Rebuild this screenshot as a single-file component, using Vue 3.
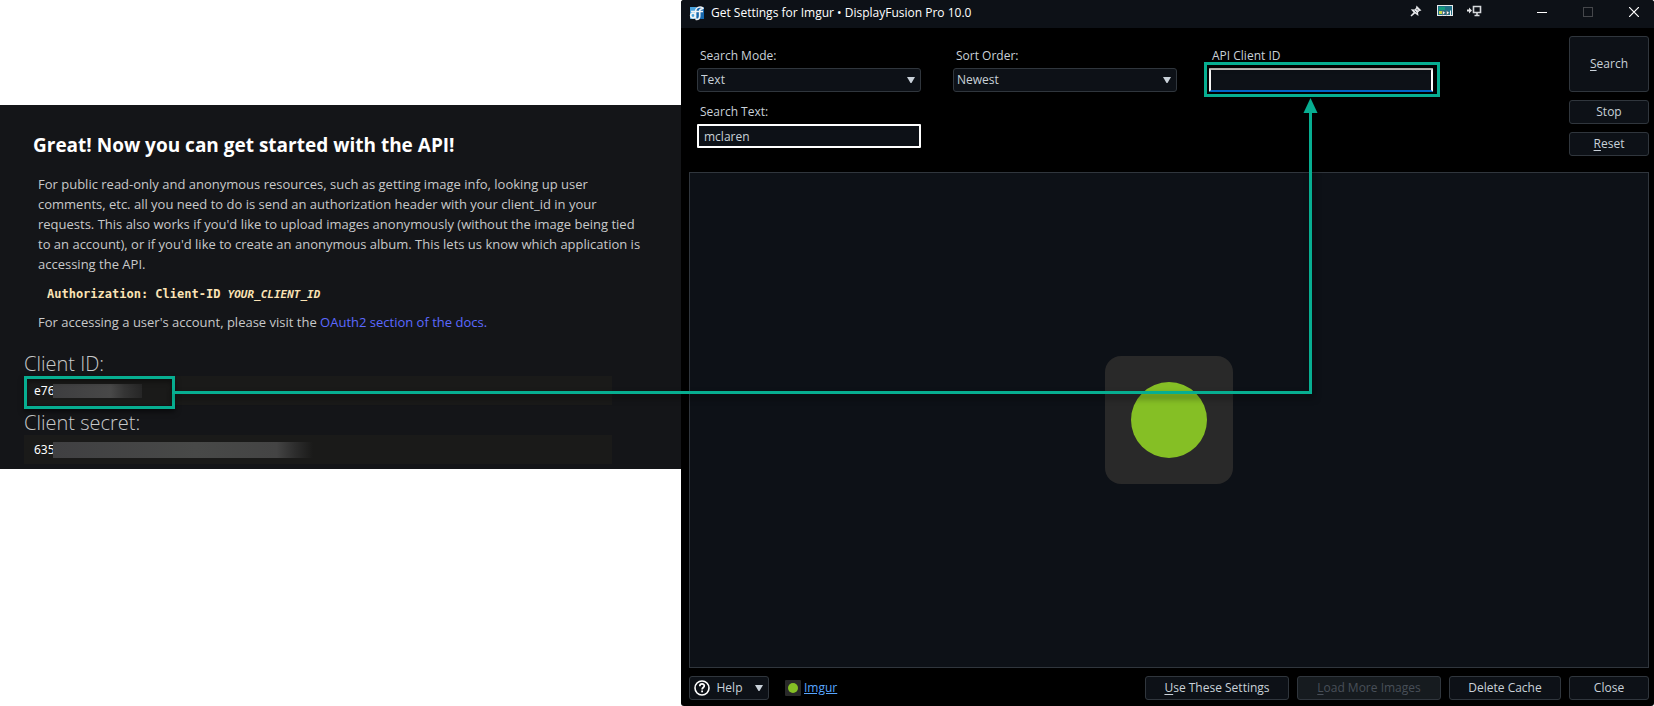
<script setup>
import { ref, onMounted, onBeforeUnmount } from 'vue'

const searchMode = ref('Text')
const sortOrder = ref('Newest')
const searchText = ref('mclaren')
const clientId = ref('')

const page = ref(null)
const source = ref(null)
const target = ref(null)
const size = ref({ w: 0, h: 0 })
const link = ref(null)
let observer

// Route the arrow from the highlighted id to the highlighted field.
function route() {
  const p = page.value.getBoundingClientRect()
  const a = source.value.getBoundingClientRect()
  const b = target.value.getBoundingClientRect()
  size.value = { w: p.width, h: p.height }
  link.value = {
    x1: Math.round(a.right - p.left) - 3,
    y1: Math.round(a.top + a.height / 2 - p.top) - 1,
    x2: Math.round(b.left + b.width * 0.45 - p.left),
    y2: Math.round(b.bottom - p.top) + 1,
  }
}

onMounted(() => {
  route()
  observer = new ResizeObserver(route)
  observer.observe(page.value)
})
onBeforeUnmount(() => observer.disconnect())
</script>

<template>
  <div ref="page" class="page">
    <main class="docs">
      <section class="docs-panel">
        <h1>Great! Now you can get started with the API!</h1>
        <div class="copy">
          <p>
            For public read-only and anonymous resources, such as getting image info, looking up user
            comments, etc. all you need to do is send an authorization header with your client_id in your
            requests. This also works if you'd like to upload images anonymously (without the image being tied
            to an account), or if you'd like to create an anonymous album. This lets us know which application is
            accessing the API.
          </p>
          <pre><code>Authorization: Client-ID <em>YOUR_CLIENT_ID</em></code></pre>
          <p>For accessing a user's account, please visit the <a href="#oauth2">OAuth2 section of the docs.</a></p>
        </div>
        <h2>Client ID:</h2>
        <div class="value">
          <span>e76</span><i class="smudge short"></i>
          <div ref="source" class="mark mark-id"></div>
        </div>
        <h2>Client secret:</h2>
        <div class="value"><span>635</span><i class="smudge long"></i></div>
      </section>
    </main>

    <section class="window">
      <header class="titlebar">
        <svg class="app-icon" width="16" height="16" viewBox="0 0 16 16" aria-hidden="true">
          <rect x="1" y="2" width="6" height="12" fill="#4aa3dc" />
          <rect x="7" y="2" width="8" height="12" fill="#1768ad" />
          <g fill="none" stroke="#f1f3f5" stroke-width="1.700">
            <circle cx="4" cy="10.500" r="2.300" />
            <path d="M6.500 13.500V7c0-3 2-5 4.500-5 2 0 3 .8 3 2M2 6.500h12M6.500 14.200c2.800.8 4.200-.8 4.200-3.200V6c0-1.500 1-2.300 3-2" />
          </g>
        </svg>
        <span class="title">Get Settings for Imgur • DisplayFusion Pro 10.0</span>
        <div class="tools">
          <button type="button" aria-label="Pin window">
            <svg width="12" height="12" viewBox="0 0 12 12">
              <path d="M6.500.5l5 5-2 .5L8 7.500 8.500 11 5 8.500 1.500 11.500.5 10.500l3-3L.8 4.200l3.700.3L6 3z" fill="#e4e6e8" />
              <path d="M4.500 5.500l2 2M6.500 4l1.500 1.500" stroke="#555b63" />
            </svg>
          </button>
          <button type="button" aria-label="Move to monitor">
            <svg width="16" height="12" viewBox="0 0 16 12">
              <rect x=".5" y=".5" width="15" height="10" fill="#1f6f86" stroke="#e8eaec" />
              <rect x="2" y="2" width="6" height="3" fill="#129a7c" />
              <rect x="2" y="6" width="3" height="3" fill="#c8d64b" />
              <path d="M5.500 5.500l3 2.300-3 2.300zM9.500 5.500l3 2.300-3 2.300z" fill="#f5f5f5" stroke="#444" stroke-width=".5" />
              <path d="M13.500 5.500v5" stroke="#f5f5f5" />
            </svg>
          </button>
          <button type="button" aria-label="Send to next monitor">
            <svg width="16" height="12" viewBox="0 0 16 12">
              <path d="M1 4.500h2V2.500L6 5.500 3 8.500v-2H1z" fill="#e4e6e8" />
              <path d="M7.500 1.500h7v6h-7zM11 8v2M8.500 10.500h5" fill="none" stroke="#d6d9dc" stroke-width="1.600" />
            </svg>
          </button>
        </div>
        <div class="controls">
          <button type="button" aria-label="Minimize">
            <svg width="10" height="10" viewBox="0 0 10 10"><path d="M0 5.500h10" stroke="#fff" /></svg>
          </button>
          <button type="button" aria-label="Maximize" disabled>
            <svg width="10" height="10" viewBox="0 0 10 10"><rect x=".5" y=".5" width="9" height="9" fill="none" stroke="#45474b" /></svg>
          </button>
          <button type="button" aria-label="Close window">
            <svg width="10" height="10" viewBox="0 0 10 10"><path d="M0 0l10 10M10 0L0 10" stroke="#fff" stroke-width="1.200" /></svg>
          </button>
        </div>
      </header>

      <div class="body">
        <form class="search" @submit.prevent>
          <div class="fields">
            <div class="field">
              <label for="mode">Search Mode:</label>
              <div class="select">
                <select id="mode" v-model="searchMode"><option>Text</option></select>
                <svg width="8" height="6" viewBox="0 0 8 6"><path d="M0 0h8L4.500 6h-1z" fill="#c9d1d9" /></svg>
              </div>
            </div>
            <div class="field">
              <label for="order">Sort Order:</label>
              <div class="select">
                <select id="order" v-model="sortOrder"><option>Newest</option></select>
                <svg width="8" height="6" viewBox="0 0 8 6"><path d="M0 0h8L4.500 6h-1z" fill="#c9d1d9" /></svg>
              </div>
            </div>
            <div class="field">
              <label for="client">API Client ID</label>
              <div class="marked">
                <input id="client" v-model="clientId" class="active" type="text" />
                <div ref="target" class="mark mark-field"></div>
              </div>
            </div>
            <div class="field">
              <label for="text">Search Text:</label>
              <input id="text" v-model="searchText" type="text" />
            </div>
          </div>
          <div class="actions">
            <button type="submit" class="btn tall"><u>S</u>earch</button>
            <button type="button" class="btn">Stop</button>
            <button type="button" class="btn"><u>R</u>eset</button>
          </div>
        </form>

        <div class="results">
          <div class="tile"><div class="dot"></div></div>
        </div>

        <footer class="bottom">
          <button type="button" class="btn help">
            <svg width="16" height="16" viewBox="0 0 16 16">
              <circle cx="8" cy="8" r="7" fill="none" stroke="#fff" stroke-width="1.600" />
              <path d="M5.800 6.200c0-3 4.600-2.900 4.500-.2 0 1.500-2.200 1.600-2.200 3.400" fill="none" stroke="#fff" stroke-width="1.700" />
              <rect x="7.200" y="10.500" width="1.800" height="1.800" fill="#fff" />
            </svg>
            <span>Help</span>
            <svg width="8" height="6" viewBox="0 0 8 6"><path d="M0 0h8L4.500 6h-1z" fill="#c9d1d9" /></svg>
          </button>
          <a class="provider" href="#imgur">
            <span class="badge"></span>
            <span class="name">Imgur</span>
          </a>
          <button type="button" class="btn wide push"><u>U</u>se These Settings</button>
          <button type="button" class="btn wide" disabled><u>L</u>oad More Images</button>
          <button type="button" class="btn medium">Delete Cache</button>
          <button type="button" class="btn">Close</button>
        </footer>
      </div>
    </section>

    <svg v-if="link" class="connector" :width="size.w" :height="size.h" aria-hidden="true">
      <path
        :d="`M${link.x1} ${link.y1 + 0.5}H${link.x2 + 0.5}V${link.y2 + 14}`"
        fill="none"
        stroke="#07ae91"
        stroke-width="3"
      />
      <path :d="`M${link.x2 + 0.5} ${link.y2}l7 15h-14z`" fill="#07ae91" />
    </svg>
  </div>
</template>

<style>
body {
  margin: 0;
  background: #fff;
}
</style>

<style scoped>
.page {
  position: relative;
  display: grid;
  grid-template-columns: 681fr 973fr;
  min-height: 100vh;
  font-family: "Open Sans", "Noto Sans", sans-serif;
}

/* Documentation side */
.docs {
  padding-top: 105px;
}
.docs-panel {
  padding: 28px 24px 5px;
  background: #141518;
  color: #c8c9ca;
}
h1 {
  margin: 0 0 17px 9px;
  color: #fff;
  font-size: 19px;
  font-weight: 700;
  line-height: 24px;
}
.copy {
  margin: 0 8px 20px 14px;
  font-size: 13px;
  line-height: 20px;
}
.copy p {
  margin: 0;
}
.copy pre {
  margin: 10px 0 7px 9px;
  color: #fbe3b5;
  font: bold 12px/20px "DejaVu Sans Mono", monospace;
}
.copy code {
  font: inherit;
}
.copy em {
  font-size: 11px;
}
.copy a {
  color: #5c69ff;
  text-decoration: none;
}
h2 {
  margin: 0;
  font-size: 20px;
  font-weight: 300;
  line-height: 24px;
}
.value {
  position: relative;
  display: flex;
  align-items: center;
  height: 29px;
  margin: 0 45px 6px 0;
  padding-left: 10px;
  background: #1a1a19;
  color: #fff;
  font: 12px/16px "Noto Sans", sans-serif;
}
.value:last-child {
  margin-bottom: 0;
}
.value span {
  width: 19px;
}
.smudge {
  height: 14px;
}
.short {
  width: 89px;
  background: linear-gradient(90deg, #3e3e40, #484848 65%, #353535 80%, #262626);
}
.long {
  width: 260px;
  height: 16px;
  background: linear-gradient(90deg, #404042, #484948 55%, #444 86%, #2d2d2d 93%, #1a1a19);
}

/* Highlights and arrow */
.mark {
  position: absolute;
  box-sizing: border-box;
  border: 3px solid #07ae91;
  box-shadow: 0 3px 5px rgba(0, 0, 0, 0.5), inset 0 3px 5px rgba(0, 0, 0, 0.4);
  pointer-events: none;
}
.mark-id {
  top: 0;
  left: 0;
  width: 151px;
  height: 33px;
}
.mark-field {
  inset: -6px -7px -5px -5px;
}
.connector {
  position: absolute;
  top: 0;
  left: 0;
  filter: drop-shadow(2px 4px 3px rgba(0, 0, 0, 0.5));
  pointer-events: none;
}

/* Settings window */
.window {
  display: flex;
  flex-direction: column;
  border-radius: 3px;
  overflow: hidden;
  background: #000;
  color: #c9d1d9;
  font-size: 12px;
  line-height: 16px;
}
.titlebar {
  display: flex;
  align-items: center;
  height: 28px;
  padding-left: 8px;
  background: #0d1117;
}
.title {
  flex: 1;
  margin-left: 6px;
  padding-bottom: 3px;
  color: #fff;
  white-space: nowrap;
}
.app-icon {
  margin-bottom: 3px;
}
.titlebar button {
  display: flex;
  align-items: center;
  justify-content: center;
  padding: 0;
  border: 0;
  background: none;
}
.tools {
  display: flex;
  gap: 1px;
  margin-right: 34px;
  padding-bottom: 6px;
}
.tools button {
  width: 28px;
}
.controls {
  display: flex;
  gap: 6px;
  padding-bottom: 4px;
}
.controls button {
  width: 40px;
}
.body {
  display: flex;
  flex: 1;
  flex-direction: column;
  padding: 8px 5px 6px 8px;
}
.search {
  display: flex;
  justify-content: space-between;
  margin-bottom: 16px;
  padding-left: 8px;
}
.fields {
  display: grid;
  grid-template-columns: repeat(3, minmax(0, 224px));
  flex: 1;
  align-content: start;
  gap: 0 32px;
  margin-right: 32px;
  padding-top: 8px;
}
.field {
  height: 56px;
}
.field label {
  display: block;
  box-sizing: border-box;
  height: 24px;
  padding: 4px 0 0 3px;
}
.select,
.marked {
  position: relative;
}
.select svg {
  position: absolute;
  top: 9px;
  right: 6px;
  pointer-events: none;
}
select,
input {
  display: block;
  box-sizing: border-box;
  width: 100%;
  height: 24px;
  margin: 0;
  background: #0d1117;
  color: inherit;
  font: inherit;
}
select {
  appearance: none;
  padding: 0 20px 0 3px;
  border: 1px solid #30363d;
  border-radius: 3px;
}
input {
  padding: 0 5px;
  border: 2px solid #fff;
  border-radius: 1px;
  outline: 0;
}
input.active {
  border-top-color: #cfcdc9;
  border-bottom-color: #0067c8;
}
.actions {
  display: flex;
  flex-direction: column;
  gap: 8px;
}
.btn {
  box-sizing: border-box;
  min-width: 80px;
  height: 24px;
  padding: 0 6px;
  border: 1px solid #30363d;
  border-radius: 3px;
  background: #0d1117;
  color: inherit;
  font: inherit;
  white-space: nowrap;
}
.btn u {
  text-underline-offset: 2px;
}
.btn:disabled {
  background: #161b1f;
  color: #484f58;
}
.tall {
  height: 56px;
}
.wide {
  width: 144px;
}
.medium {
  width: 112px;
}
.results {
  display: flex;
  flex: 1;
  align-items: center;
  justify-content: center;
  margin-bottom: 8px;
  border: 1px solid #30363d;
  background: #0d1117;
}
.tile {
  display: grid;
  place-items: center;
  width: 128px;
  height: 128px;
  border-radius: 16px;
  background: #292929;
}
.dot {
  width: 76px;
  height: 76px;
  border-radius: 50%;
  background: #85bf25;
}
.bottom {
  display: flex;
  gap: 8px;
}
.help {
  display: flex;
  align-items: center;
  justify-content: space-between;
  width: 80px;
  padding: 0 5px 0 4px;
}
.help span {
  margin-right: 6px;
}
.provider {
  display: flex;
  align-items: center;
  gap: 3px;
  margin-left: 8px;
  color: #58a6ff;
}
.badge {
  display: grid;
  place-items: center;
  width: 16px;
  height: 16px;
  border-radius: 1px;
  background: #292929;
}
.badge::before {
  content: "";
  width: 10px;
  height: 10px;
  border-radius: 50%;
  background: #85bf25;
}
.push {
  margin-left: auto;
}
</style>
